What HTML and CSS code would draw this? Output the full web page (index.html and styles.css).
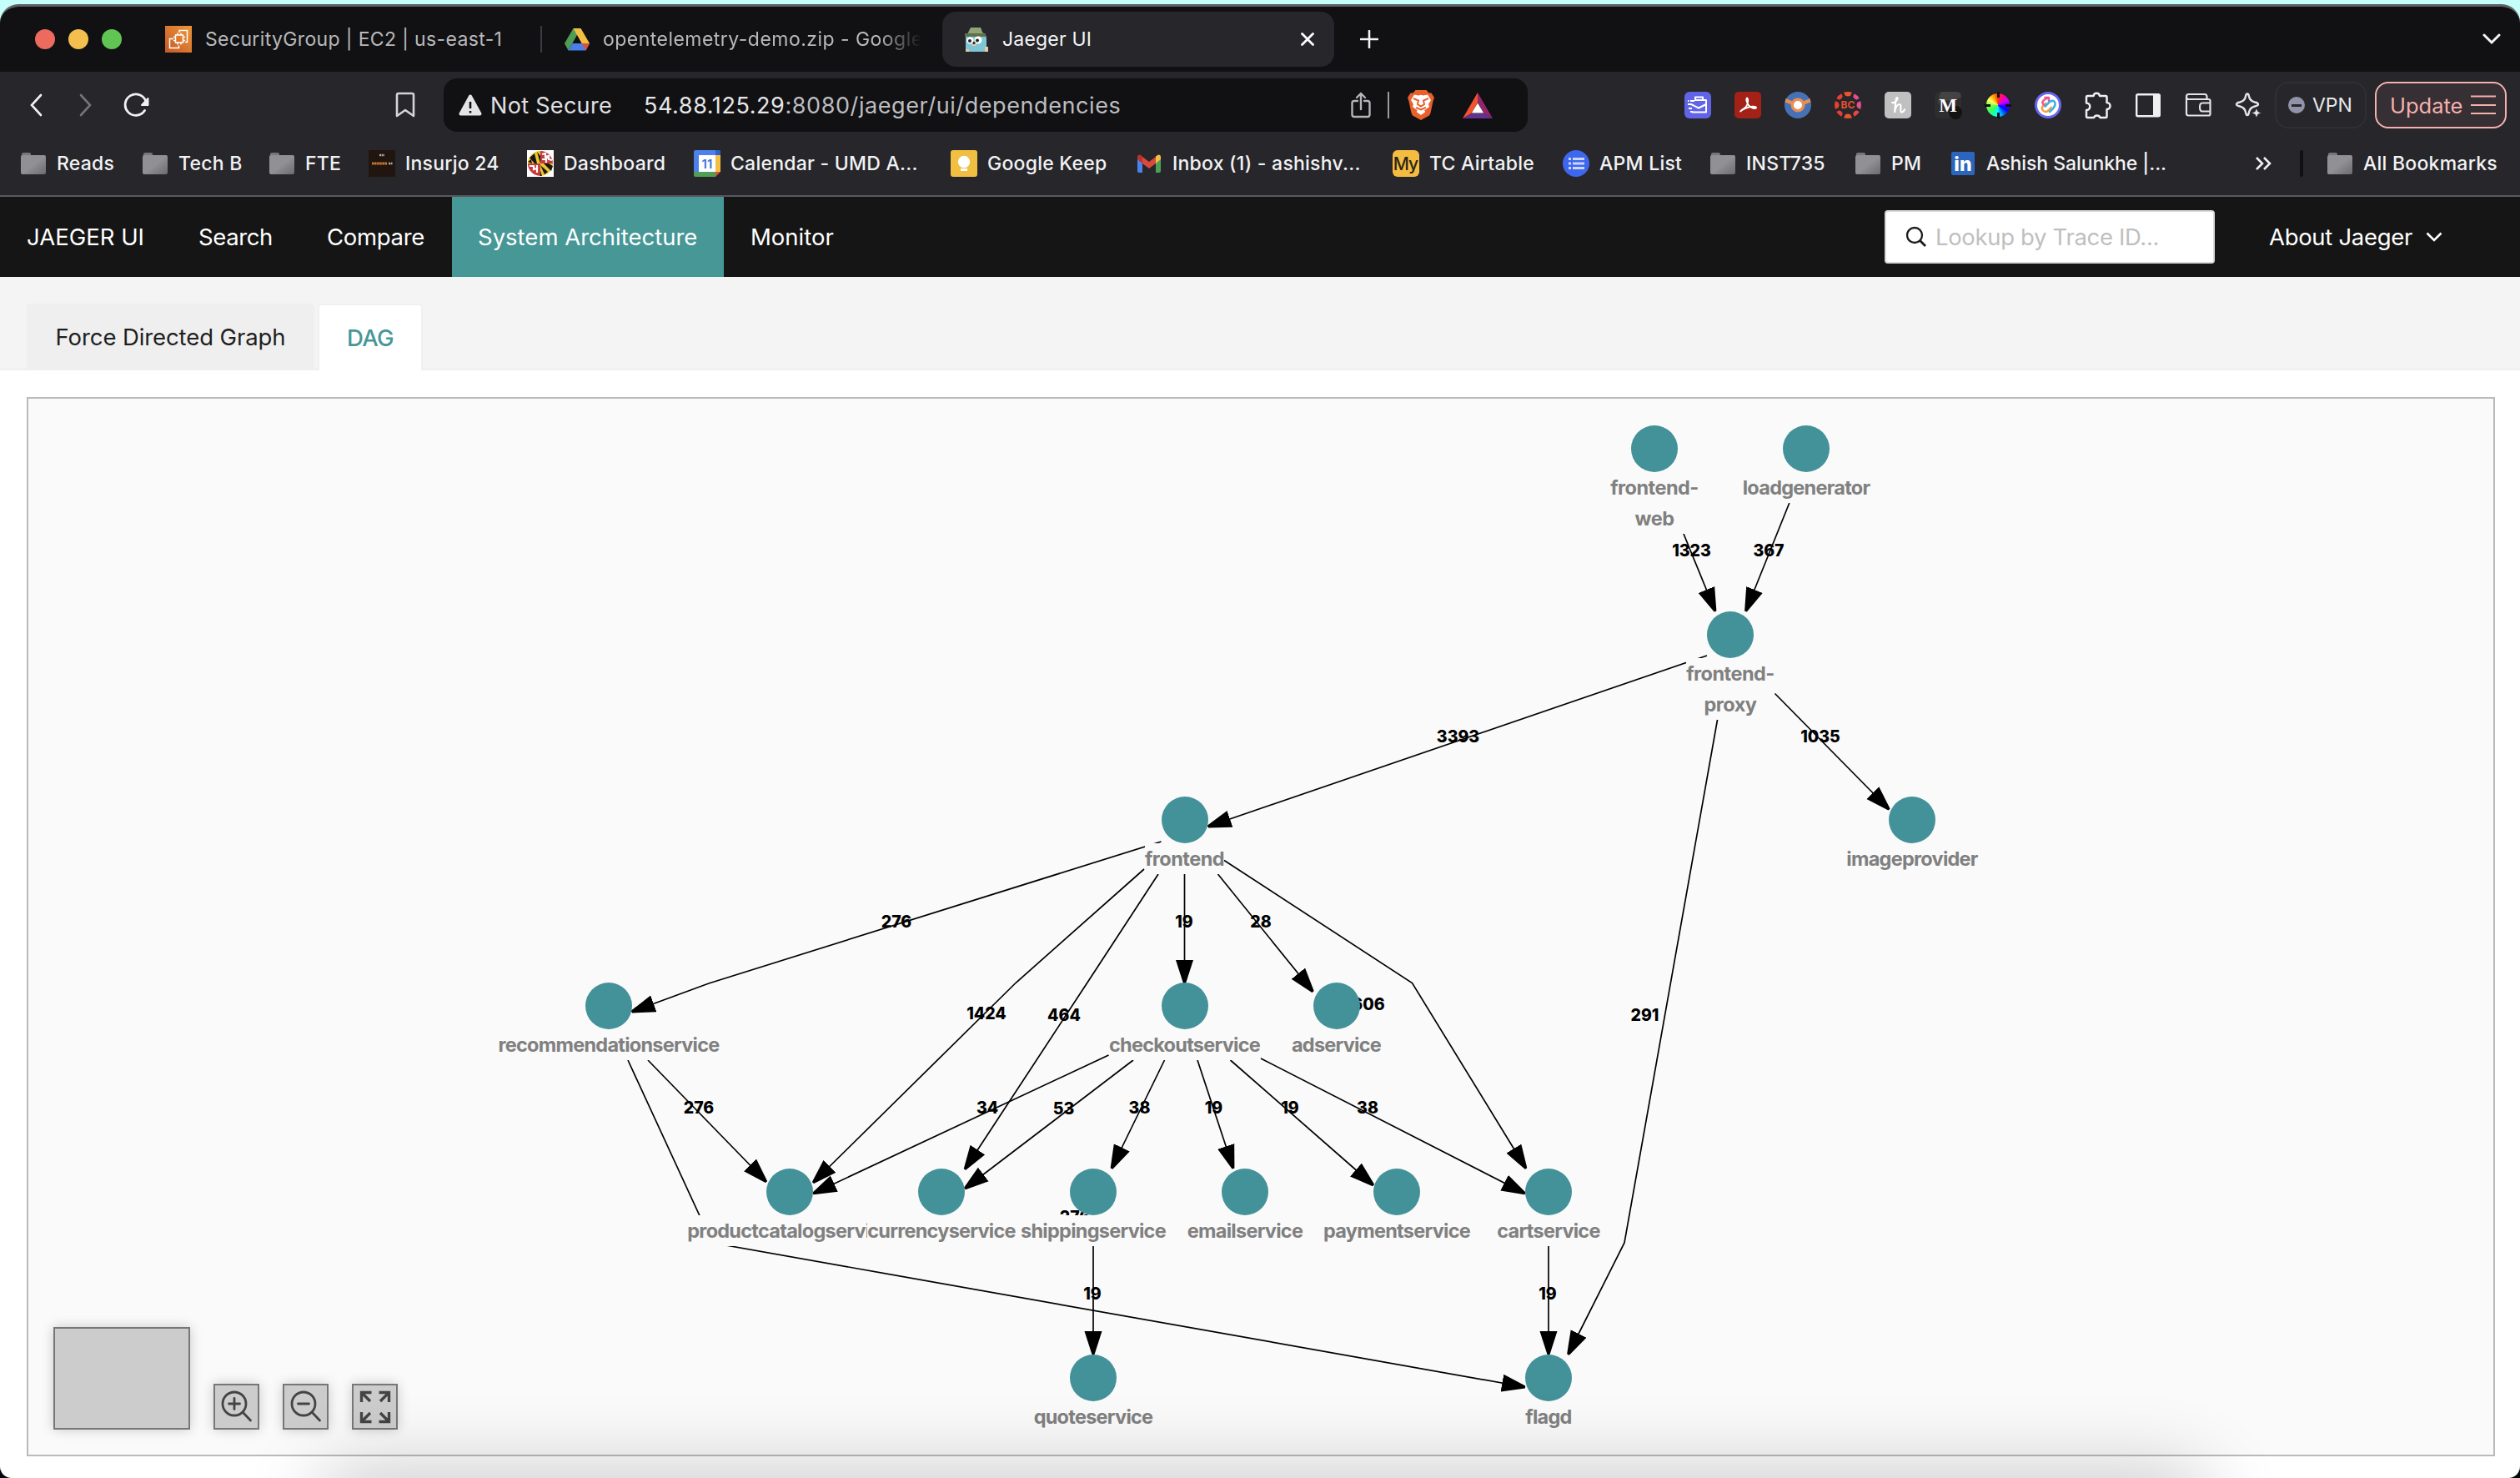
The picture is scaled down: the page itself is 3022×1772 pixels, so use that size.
FILE: index.html
```html
<!DOCTYPE html>
<html lang="en">
<head>
<meta charset="utf-8">
<title>Jaeger UI</title>
<link rel="stylesheet" href="styles.css">
</head>
<body>
<svg width="0" height="0" class="defs" aria-hidden="true">
  <defs>
    <linearGradient id="fold" x1="0" y1="0" x2="1" y2="1"><stop offset="0" stop-color="#8f8f94"/><stop offset=".5" stop-color="#909095"/><stop offset="1" stop-color="#6c6c6e"/></linearGradient>
    <linearGradient id="ec2" x1="0" y1="1" x2="1" y2="0"><stop offset="0" stop-color="#c45a26"/><stop offset="1" stop-color="#f0953a"/></linearGradient>
    <linearGradient id="shz" x1="0" y1="0" x2="1" y2="0"><stop offset="0" stop-color="#f5a742"/><stop offset=".5" stop-color="#ef5d8f"/><stop offset="1" stop-color="#3fb7e8"/></linearGradient>
    <symbol id="folder" viewBox="0 0 30 26"><path d="M1 4V2a2 2 0 0 1 2-2h7a2 2 0 0 1 2 2v1z" fill="#77777b"/><rect y="3" width="30" height="23" rx="2" fill="url(#fold)"/></symbol>
  </defs>
</svg>
<div class="window">
  <header class="tabstrip">
    <div class="lights"><i class="red"></i><i class="yellow"></i><i class="green"></i></div>
    <div class="tab t1">
      <svg width="32" height="32" viewBox="0 0 32 32"><rect width="32" height="32" fill="url(#ec2)"/><g fill="none" stroke="#fff" stroke-width="1.500"><rect x="12.500" y="11" width="9" height="9"/><path d="M15 11V8.500M19 11V8.500M15 22.500V20M19 22.500V20M12.500 13.500H10M12.500 17.500H10M24 13.500h-2.500M24 17.500h-2.500M17 8V5.500h9.500v14H24M10 15.500H5.500v11h11V23.500"/></g></svg>
      <span>SecurityGroup | EC2 | us-east-1</span>
    </div>
    <i class="tabsep"></i>
    <div class="tab t2">
      <svg width="30" height="27" viewBox="0 0 30 27"><path d="M10.500 0h9L10 17l-5.500 9.500L0 18z" fill="#4f9d54"/><path d="M10.500 0h9L30 18H20.500z" fill="#f3bf42"/><path d="M9.500 18H30l-4.500 8.500h-21z" fill="#4a7fe8"/><path d="M20.500 18H30l-4.500 8.500z" fill="#d8523f"/><path d="M15 8.500L9.700 18h10.800z" fill="#111113"/></svg>
      <span class="fade">opentelemetry-demo.zip - Google Drive</span>
    </div>
    <div class="tab active">
      <svg width="30" height="32" viewBox="0 0 30 32"><path d="M2 31V14q0-5 6-6h13q6 1 6 7v16z" fill="#7ec5d6"/><path d="M8 2h12l3 8H4z" fill="#93a277"/><path d="M1 9h25v4H1z" fill="#5f7049"/><circle cx="7.500" cy="17.500" r="4" fill="#fff"/><circle cx="17" cy="17" r="4.500" fill="#fff"/><circle cx="7" cy="18" r="2" fill="#222"/><circle cx="16" cy="17.500" r="2" fill="#222"/><ellipse cx="12" cy="22" rx="3" ry="2" fill="#e7c9a5"/><circle cx="12" cy="20.500" r="1.600" fill="#222"/><path d="M25 25h4v6h-4zM2 28h4v3H2z" fill="#e7c9a5"/></svg>
      <span>Jaeger UI</span>
      <svg class="close" width="16" height="16" viewBox="0 0 16 16"><path d="M1.500 1.500l13 13M14.500 1.500l-13 13" stroke="#fff" stroke-width="2.800" stroke-linecap="round"/></svg>
    </div>
    <svg class="plus" width="22" height="22" viewBox="0 0 22 22"><path d="M11 1v20M1 11h20" stroke="#f4f4f5" stroke-width="2.600" stroke-linecap="round"/></svg>
    <svg class="tabmenu" width="22" height="14" viewBox="0 0 22 14"><path d="M2 2l9 9 9-9" fill="none" stroke="#f4f4f5" stroke-width="3" stroke-linecap="round"/></svg>
  </header>

  <div class="toolbar">
    <svg class="back" width="16" height="28" viewBox="0 0 16 28"><path d="M14 2L3 14l11 12" fill="none" stroke="#f0f0f2" stroke-width="2.600" stroke-linecap="round"/></svg>
    <svg class="fwd" width="16" height="28" viewBox="0 0 16 28"><path d="M2 2l11 12L2 26" fill="none" stroke="#747479" stroke-width="2.600" stroke-linecap="round"/></svg>
    <svg class="reload" width="32" height="30" viewBox="0 0 32 30"><path d="M25.500 21.500A12.700 12.700 0 1 1 27 11" fill="none" stroke="#f0f0f2" stroke-width="2.800" stroke-linecap="round"/><path d="M29.500 7v8h-7.500z" fill="#f0f0f2" stroke="#f0f0f2" stroke-width="2" stroke-linejoin="round"/></svg>
    <svg class="mark" width="24" height="32" viewBox="0 0 24 32"><path d="M2 4q0-2 2-2h16q2 0 2 2v25l-10-7-10 7z" fill="none" stroke="#d5d5d8" stroke-width="2.600" stroke-linejoin="round"/></svg>
    <div class="omnibox">
      <svg width="28" height="26" viewBox="0 0 28 26"><path d="M14 2.500L2.500 23.500h23z" fill="#e4e4e7" stroke="#e4e4e7" stroke-width="4" stroke-linejoin="round"/><path d="M14 9v8M14 20v2.500" stroke="#111113" stroke-width="2.600"/></svg>
      <span class="notsecure">Not Secure</span>
      <span class="url"><b>54.88.125.29</b>:8080/jaeger/ui/dependencies</span>
      <svg class="share" width="24" height="32" viewBox="0 0 24 32"><path d="M8 11H4q-2.500 0-2.500 2.500v14Q1.500 30 4 30h16q2.500 0 2.500-2.500v-14Q22.500 11 20 11h-4M12 21V2M7 7l5-5 5 5" fill="none" stroke="#b4b4b8" stroke-width="2.400" stroke-linecap="round" stroke-linejoin="round"/></svg>
      <i class="vsep"></i>
      <svg class="brave" width="32" height="36" viewBox="0 0 32 36"><path d="M9.500 0h13l3 3.500h3L32 9l-1.500 4.500-3 14-1.500 3L16 36 6 30.500l-1.500-3-3-14L0 9l3.500-5.500h3z" fill="#ea5f2b"/><path d="M8 5.500l5 1 3-.8 3 .8 5-1 4 6.500-3 5 1 3-6 4.500 1.500 1.500L16 30l-5.500-4L12 24.500 6 20l1-3-3-5z" fill="#fff"/><path d="M7 10l6 2.500L12 17l4 2.500L20 17l-1-4.500 6-2.500M10 21l6 2.500 6-2.500" fill="none" stroke="#ea5f2b" stroke-width="2"/></svg>
      <svg class="bat" width="36" height="31" viewBox="0 0 36 31"><path d="M18 0L0 31l10.500-6L18 12z" fill="#f2522c"/><path d="M18 0l18 31-10.500-6L18 12z" fill="#96266a"/><path d="M0 31h36l-10.500-6h-15z" fill="#62328f"/><path d="M18 12.500L10.800 24.500h14.400z" fill="#fff"/></svg>
    </div>
    <div class="exts">
      <svg viewBox="0 0 32 32"><rect width="32" height="32" rx="6" fill="#6264e8"/><g fill="none" stroke="#fff" stroke-width="2" stroke-linejoin="round"><path d="M12 10h14v14.500H9M13 10V6.500h9V10M8 15l9 4.500 9-4.500M4 11h1.500M7 11h5M4 15h5M5 20h4M7 24h3"/></g></svg>
      <svg viewBox="0 0 32 32"><rect width="32" height="32" rx="5" fill="#a32117"/><path d="M7 24c2-4 6-3 8-8 2-5 1-8 .3-8.500-2 0-1 7 3.700 10.500 4 3 7 2 7 1 0-2-8-1.500-13 1-4 2-6 3-6 4z" fill="none" stroke="#fff" stroke-width="1.900"/></svg>
      <svg viewBox="0 0 32 32"><circle cx="16" cy="16" r="16" fill="#4672b5"/><path d="M1.500 8L11 12h10l9.500-4 1 4.500L22 16H10L.5 12.500z" fill="#e88e56"/><circle cx="16" cy="16" r="8.500" fill="#e88e56"/><circle cx="16" cy="16" r="5" fill="#fff"/></svg>
      <svg viewBox="0 0 32 32"><g fill="#e8402f"><path d="M11 0.800q5-1.600 10 0l-2 4q-3 1.500-6 0z" fill="#e9552c"/><path d="M11 31.200q5 1.600 10 0l-2-4q-3-1.500-6 0z" fill="#e9552c"/><path d="M.8 11q-1.600 5 0 10l4-2q1.500-3 0-6z"/><path d="M2.300 8q2-4 6-5.800l1.500 3.500q-1 3-4 4z"/><path d="M2.300 24q2 4 6 5.800l1.500-3.500q-1-3-4-4z"/></g><g fill="#e14f8e"><path d="M31.200 11q1.600 5 0 10l-4-2q-1.500-3 0-6z"/><path d="M29.700 8q-2-4-6-5.800l-1.500 3.500q1 3 4 4z"/><path d="M29.700 24q-2 4-6 5.800l-1.500-3.500q1-3 4-4z" fill="#e8483f"/></g><text x="16" y="20" class="bc">BC</text></svg>
      <svg viewBox="0 0 32 32"><rect width="32" height="32" rx="5" fill="#c0c0c0"/><path d="M9 13c4 1 8-5 6-6-2 0-2 10-3 18 1-6 3-10 6-10s0 9 2 9.500c2 0 3-1 4-3" fill="none" stroke="#fff" stroke-width="2.200" stroke-linecap="round"/></svg>
      <svg viewBox="0 0 32 32"><rect width="32" height="32" rx="6" fill="#2e2e2f"/><path d="M8 0h18q6 0 6 6-4 4-14 5Q7 8 4 16 4 6 8 0z" fill="#434344"/><circle cx="25" cy="25" r="8" fill="#131313"/><text x="16" y="24" class="emm">M</text></svg>
      <i class="wheel"></i>
      <svg viewBox="0 0 32 32"><circle cx="16" cy="16" r="14.500" fill="#fff" stroke="#6669ee" stroke-width="3"/><g fill="none" stroke-width="2.600" stroke-linecap="round" stroke-linejoin="round"><path d="M13 14q-6 4-3.500 8 3.500 4 7.500 0l2.500-3" stroke="#f2a23d"/><path d="M13 17q-6-3-2-7l5-3M12.500 7H17v4" stroke="#ee5a92"/><path d="M12.500 17.500l6-6q5-2 6 2t-6.500 10.500" stroke="#3fb0e6"/></g></svg>
      <svg viewBox="0 0 32 32"><path d="M5 5h5.500a3.800 3.800 0 0 1 7.500 0H25q1.500 0 1.500 1.500V13a4 4 0 0 1 0 8v8.500q0 1.500-1.500 1.500h-6.500a4 4 0 0 0-7.500 0H3.500Q2 31 2 29.500V22a4 4 0 0 0 0-8.500V6.500Q2 5 3.500 5z" fill="none" stroke="#f0f0f2" stroke-width="2.500" stroke-linejoin="round"/></svg>
      <svg viewBox="0 0 32 32"><rect x="2.200" y="3.200" width="27.600" height="26" rx="1.500" fill="none" stroke="#f0f0f2" stroke-width="2.400"/><path d="M22 3h8v26h-8z" fill="#f0f0f2"/></svg>
      <svg viewBox="0 0 32 32"><path d="M2 6v20q0 2.500 2.500 2.500h24q2 0 2-2V11q0-2-2-2H4.500Q2 9 2 6t2.500-3H24q2 0 2.500 2.500V9M30.500 13.500H21q-3 0-3 5t3 5h9.500" fill="none" stroke="#e4e4e6" stroke-width="2.200"/></svg>
      <svg viewBox="0 0 32 32"><path d="M15 2.500q1.500 0 2 3 1 5.500 7 7 4 .8 4 2.500t-4 2.500q-6 1.500-7 7-.5 3.500-2 3.500t-2-3.500q-1-5.500-7-7-4-.8-4-2.500t4-2.500q6-1.500 7-7 .5-3 2-3z" fill="none" stroke="#e4e4e6" stroke-width="2.400"/><path d="M26 19l1.800 4.600L32 25.500l-4.200 1.800L26 32l-1.800-4.700-4.700-1.800 4.700-1.900z" fill="#e4e4e6" stroke="#26262b"/></svg>
    </div>
    <div class="vpn"><i></i><span>VPN</span></div>
    <div class="update"><span>Update</span><svg width="30" height="24" viewBox="0 0 30 24"><path d="M0 1.500h30M0 12h30M0 22h30" stroke="#f4b1af" stroke-width="2.200"/></svg></div>
  </div>

  <div class="bookmarks">
    <div class="f"><svg><use href="#folder"/></svg><span>Reads</span></div>
    <div class="f"><svg><use href="#folder"/></svg><span>Tech B</span></div>
    <div class="f"><svg><use href="#folder"/></svg><span>FTE</span></div>
    <div><svg viewBox="0 0 32 32"><rect width="32" height="32" fill="#20160f"/><path d="M4 16h18" stroke="#cf7a31" stroke-width="3" stroke-dasharray="2.500 .6"/><path d="M24 16h5M13 6h6" stroke="#b5aba1" stroke-width="2.500" stroke-dasharray="2 .6"/></svg><span>Insurjo 24</span></div>
    <div><svg viewBox="0 0 32 32"><rect width="32" height="32" fill="#fff"/><circle cx="16" cy="16" r="15" fill="#fff"/><path d="M16 1v15H1A15 15 0 0 1 16 1z" fill="#e9c62f"/><path d="M16 31V16h15a15 15 0 0 1-15 15z" fill="#e9c62f"/><path d="M3 9l6-5 3 12H9zM12 2l4 5v9zM1 14l4-3 1 5zM16 18l5 11 4-3zM20 16l9 9 2-6-5-3zM16 25l2 6h-2z" fill="#171717"/><path d="M16 1a15 15 0 0 1 15 15H16z" fill="#c63a3c"/><path d="M16 31A15 15 0 0 1 1 16h15z" fill="#c63a3c"/><path d="M18 5l4-1v4l4-1v4l4 1M18 11h5v4M3 19h5v4l4-1v5M12 18v3M22 9h3" stroke="#fff" stroke-width="2.200" fill="none"/></svg><span>Dashboard</span></div>
    <div><svg viewBox="0 0 32 32"><path d="M2 0h28q2 0 2 2v24H0V2q0-2 2-2z" fill="#4c82ea"/><path d="M26 6h6v20h-6z" fill="#f3bf42"/><path d="M26 0h4q2 0 2 2v4h-6z" fill="#2c62c8"/><path d="M0 26h26v6H2q-2 0-2-2z" fill="#4f9f57"/><path d="M26 26h6l-6 6z" fill="#d8503f"/><path d="M6 6h20v20H6z" fill="#fff"/><text x="16" y="22" class="eleven">11</text></svg><span>Calendar - UMD A...</span></div>
    <div><svg viewBox="0 0 32 32"><rect width="32" height="32" rx="3" fill="#f1bf42"/><circle cx="16" cy="14" r="7.200" fill="#fff"/><path d="M12 18h8v2.500h-8zM12 22h8v3h-8z" fill="#fff"/></svg><span>Google Keep</span></div>
    <div><svg viewBox="0 0 32 32"><path d="M2 9v16q0 2 2 2h4V13z" fill="#4c82ea"/><path d="M30 9v16q0 2-2 2h-4V13z" fill="#4f9f57"/><path d="M24 7.500L27 5.500q3 0 3 3V11l-6 5z" fill="#f3bf42"/><path d="M8 7.500L5 5.500q-3 0-3 3V11l6 5z" fill="#b8342c"/><path d="M8 8l8 6 8-6v8l-8 6-8-6z" fill="#d9493c"/></svg><span>Inbox (1) - ashishv...</span></div>
    <div><svg viewBox="0 0 32 32"><rect width="32" height="32" rx="6" fill="#f5bc42"/><text x="15.500" y="24" class="my">My</text></svg><span>TC Airtable</span></div>
    <div><svg viewBox="0 0 32 32"><circle cx="16" cy="16" r="16" fill="#3f67ee"/><path d="M7 10.500h3M7 16h3M7 21.500h3M12 10.500h14M12 16h14M12 21.500h14" stroke="#c9d6ff" stroke-width="3"/></svg><span>APM List</span></div>
    <div class="f"><svg><use href="#folder"/></svg><span>INST735</span></div>
    <div class="f"><svg><use href="#folder"/></svg><span>PM</span></div>
    <div><svg viewBox="0 0 32 32"><rect x="2" y="2" width="28" height="28" rx="2" fill="#2b65bd"/><text x="16" y="25" class="lin">in</text></svg><span class="tight">Ashish Salunkhe |...</span></div>
    <div><svg class="more" viewBox="0 0 20 18"><path d="M2 2l7 7-7 7M11 2l7 7-7 7" fill="none" stroke="#f0f0f2" stroke-width="2.600"/></svg></div>
    <i></i>
    <div class="f"><svg><use href="#folder"/></svg><span>All Bookmarks</span></div>
  </div>

  <nav class="nav">
    <a class="brand"><span>JAEGER UI</span></a>
    <a class="n2"><span>Search</span></a>
    <a class="n3"><span>Compare</span></a>
    <a class="on"><span>System Architecture</span></a>
    <a><span>Monitor</span></a>
    <div class="lookup"><svg width="26" height="26" viewBox="0 0 26 26"><circle cx="11" cy="11" r="9" fill="none" stroke="#1c1c1c" stroke-width="2.300"/><path d="M17.500 17.500l6.500 6.500" stroke="#1c1c1c" stroke-width="2.800"/></svg><span>Lookup by Trace ID...</span></div>
    <div class="about"><span>About Jaeger</span><svg width="20" height="12" viewBox="0 0 20 12"><path d="M1.500 1.500L10 10l8.500-8.500" fill="none" stroke="#fff" stroke-width="2.600"/></svg></div>
  </nav>

  <div class="subtabs">
    <div class="st"><span>Force Directed Graph</span></div>
    <div class="st sel"><span>DAG</span></div>
  </div>

  <main class="page">
    <div class="canvas">
      <svg class="edges" viewBox="34 478 2956 1266">
        <defs><marker id="arrow" markerUnits="userSpaceOnUse" markerWidth="30" markerHeight="22" refX="28" refY="11" orient="auto"><path d="M0 .5L28 9.500v3L0 21.500z"/></marker></defs>
        <g fill="none" stroke="#000" stroke-width="1.700">
          <path marker-end="url(#arrow)" d="M2019 640L2057 733"/>
          <path marker-end="url(#arrow)" d="M2145.800 603L2093.500 733"/>
          <path marker-end="url(#arrow)" d="M2128.500 831.500L2265.500 970.500"/>
          <path marker-end="url(#arrow)" d="M2047 786L1448.500 991"/>
          <path marker-end="url(#arrow)" d="M2059.700 862L1948 1490L1880.500 1624"/>
          <path marker-end="url(#arrow)" d="M1392.500 1009L850 1179L757.500 1213"/>
          <path marker-end="url(#arrow)" d="M1372 1042L1218.500 1178L975 1418"/>
          <path marker-end="url(#arrow)" d="M1389 1048L1304 1178L1157 1402"/>
          <path marker-end="url(#arrow)" d="M1420.500 1048V1179"/>
          <path marker-end="url(#arrow)" d="M1460.500 1048L1574.500 1189"/>
          <path marker-end="url(#arrow)" d="M1468 1031.500L1693.500 1178.500L1830 1401"/>
          <path marker-end="url(#arrow)" d="M1329.500 1265L975 1431"/>
          <path marker-end="url(#arrow)" d="M1359 1271L1157 1425"/>
          <path marker-end="url(#arrow)" d="M1396.500 1271L1333 1401"/>
          <path marker-end="url(#arrow)" d="M1436 1271L1479 1401"/>
          <path marker-end="url(#arrow)" d="M1475.500 1271L1647 1421"/>
          <path marker-end="url(#arrow)" d="M1512 1269L1829 1431"/>
          <path marker-end="url(#arrow)" d="M777 1271L919 1417"/>
          <path marker-end="url(#arrow)" d="M753 1271L854 1490L1829 1663"/>
          <path marker-end="url(#arrow)" d="M1311 1494V1624"/>
          <path marker-end="url(#arrow)" d="M1857 1494V1624"/>
        </g>
        <g class="counts">
          <text x="2028.500" y="666.500">1323</text><text x="2121" y="666.500">367</text><text x="2183" y="889.500">1035</text><text x="1748.500" y="889.500">3393</text>
          <text x="1075" y="1112">276</text><text x="1420" y="1112">19</text><text x="1512" y="1112">28</text>
          <text x="1183" y="1221.500">1424</text><text x="1276" y="1223.500">464</text><text x="1641" y="1210.500">606</text><text x="1972.500" y="1223.500">291</text>
          <text x="838" y="1334.500">276</text><text x="1184" y="1334.500">34</text><text x="1275.500" y="1335.500">53</text><text x="1366.500" y="1334.500">38</text><text x="1455.500" y="1334.500">19</text><text x="1547" y="1334.500">19</text><text x="1640" y="1334.500">38</text>
          <text x="1289" y="1466">276</text><text x="1310" y="1557.500">19</text><text x="1856" y="1557.500">19</text>
        </g>
      </svg>
      <div class="node" style="left:1950px;top:60px"><i></i><span class="two">frontend-<br>web</span></div>
      <div class="node" style="left:2132px;top:60px"><i></i><span>loadgenerator</span></div>
      <div class="node" style="left:2041px;top:283px"><i></i><span class="two">frontend-<br>proxy</span></div>
      <div class="node" style="left:2259px;top:505px"><i></i><span>imageprovider</span></div>
      <div class="node" style="left:1386.500px;top:505px"><i></i><span class="two">frontend</span></div>
      <div class="node" style="left:696px;top:728px"><i></i><span>recommendationservice</span></div>
      <div class="node" style="left:1386.500px;top:728px"><i></i><span>checkoutservice</span></div>
      <div class="node" style="left:1568.500px;top:728px"><i></i><span>adservice</span></div>
      <div class="node" style="left:913px;top:951px"><i></i><span>productcatalogservice</span></div>
      <div class="node" style="left:1095px;top:951px"><i></i><span>currencyservice</span></div>
      <div class="node" style="left:1277px;top:951px"><i></i><span>shippingservice</span></div>
      <div class="node" style="left:1459px;top:951px"><i></i><span>emailservice</span></div>
      <div class="node" style="left:1641px;top:951px"><i></i><span>paymentservice</span></div>
      <div class="node" style="left:1823px;top:951px"><i></i><span>cartservice</span></div>
      <div class="node clear" style="left:1277px;top:1174px"><i></i><span>quoteservice</span></div>
      <div class="node clear" style="left:1823px;top:1174px"><i></i><span>flagd</span></div>
      <div class="controls">
        <div class="minimap"></div>
        <div class="btn"><svg viewBox="0 0 36 42"><circle cx="15" cy="17" r="14" /><path d="M8.500 17h13M15 10.500v13M25 27l9.500 10"/></svg></div>
        <div class="btn"><svg viewBox="0 0 36 42"><circle cx="15" cy="17" r="14" /><path d="M8.500 17h13M25 27l9.500 10"/></svg></div>
        <div class="btn"><svg viewBox="0 0 36 42"><path class="k" d="M1.500 15V3.500h12M1.500 3.500L12 14M34.500 15V3.500h-12M34.500 3.500L24 14M1.500 27v11.500h12M1.500 38.500L12 28M34.500 27v11.500h-12M34.500 38.500L24 28"/></svg></div>
      </div>
    </div>
  </main>
  <div class="dockshade"></div>
</div>
</body>
</html>
```
FILE: styles.css
```css
* { box-sizing: border-box; }
body { margin: 0; width: 3022px; height: 1772px; overflow: hidden; background: linear-gradient(#c5fffa 0 60px, #05070f 60px); font-family: Inter, "Liberation Sans", sans-serif; }
i { display: block; font-style: normal; }
svg { display: block; flex: none; }
span { white-space: nowrap; }
.defs { position: absolute; }
.window { position: relative; margin-top: 5px; height: 1767px; border-radius: 22px 22px 14px 14px; overflow: hidden; background: #fff; border-top: 3px solid #5e6063; }
.tabstrip { display: flex; align-items: center; height: 78px; background: #111113; padding-left: 42px; font-size: 23px; color: #b9b9bc; letter-spacing: .36px; }
.lights { display: flex; gap: 16px; width: 156px; }
.lights i { width: 24px; height: 24px; border-radius: 50%; }
.red { background: #ec6a5e; }
.yellow { background: #f4bf4f; }
.green { background: #61c554; }
.tab { display: flex; align-items: center; gap: 16px; }
.t1 { width: 450px; }
.tabsep { width: 2px; height: 32px; background: #3b3b40; margin-right: 27px; }
.t2 { width: 453px; letter-spacing: .47px; }
.fade { width: 382px; overflow: hidden; -webkit-mask-image: linear-gradient(90deg, #000 330px, transparent 382px); mask-image: linear-gradient(90deg, #000 330px, transparent 382px); }
.active { width: 470px; height: 66px; border-radius: 16px; background: #26262b; padding: 0 24px 0 26px; color: #f5f5f6; letter-spacing: .2px; }
.close { margin-left: auto; }
.plus { margin-left: 31px; }
.tabmenu { margin-left: auto; margin-right: 23px; }

.toolbar { display: flex; align-items: center; height: 80px; background: #26262b; padding-left: 35px; }
.fwd { margin-left: 44px; }
.reload { margin-left: 37px; }
.mark { margin-left: 294px; }
.omnibox { display: flex; align-items: center; margin-left: 34px; width: 1300px; height: 64px; border-radius: 16px; background: #111113; padding-left: 18px; font-size: 27px; color: #bdbdc0; }
.notsecure { margin-left: 10px; width: 184px; color: #e0e0e3; letter-spacing: .31px; }
.url { width: 848px; letter-spacing: .58px; }
.url b { font-weight: 400; color: #e6e6e8; }
.vsep { width: 2px; height: 32px; background: #9b9b9f; margin: 0 22px 0 20px; }
.bat { margin-left: 34px; }
.exts { display: flex; gap: 28px; margin-left: 188px; width: 708px; }
.exts svg, .wheel { width: 32px; height: 32px; overflow: visible; }
.wheel { position: relative; border: 2px solid #26262b; border-radius: 50%; background: conic-gradient(#f30, #f0a 35deg, #c0f 65deg, #50f 90deg, #00f 120deg, #0af 160deg, #0ff 185deg, #3f6 225deg, #7f4 265deg, #ff6 300deg, #fa0 330deg, #f30); }
.wheel::after { content: ""; position: absolute; inset: -2px; background: linear-gradient(#111, #111) 50% 0 / 3px 7px, linear-gradient(#111, #111) 50% 100% / 3px 7px, linear-gradient(#111, #111) 0 50% / 7px 3px, linear-gradient(#111, #111) 100% 50% / 7px 3px; background-repeat: no-repeat; }
.bc { font: 700 12px Inter, sans-serif; text-anchor: middle; fill: #e8502f; }
.emm { font: 700 23px "Liberation Serif", serif; text-anchor: middle; fill: #fff; }
.vpn { display: flex; align-items: center; gap: 9px; width: 110px; height: 56px; border: 2px solid #2f2f35; border-radius: 16px; padding-left: 14px; font-size: 23px; color: #e8e8ea; }
.vpn i { width: 20px; height: 20px; border-radius: 50%; background: linear-gradient(#26262b, #26262b) center / 12px 3px no-repeat #9193a8; }
.update { display: flex; align-items: center; justify-content: space-between; margin-left: 10px; width: 158px; height: 56px; border: 2px solid #f4b1af; border-radius: 16px; background: #362f33; padding: 0 11px 0 16px; font-size: 25.500px; color: #f4b1af; }

.bookmarks { display: grid; grid-template-columns: 146px 152px 119px 190px 200px 308px 222px 308px 204px 177px 174px 113px 366px 56px 31px auto; align-items: center; height: 70px; background: #26262b; border-bottom: 2px solid #58585e; padding: 0 0 8px 25px; font-size: 23px; font-weight: 500; letter-spacing: .24px; color: #f2f2f3; }
.bookmarks > div { display: flex; align-items: center; gap: 12px; }
.bookmarks .f { gap: 13px; }
.bookmarks .tight { letter-spacing: -.06px; }
.bookmarks svg { width: 32px; height: 32px; }
.bookmarks .f svg { width: 30px; height: 26px; }
.bookmarks .more { width: 20px; height: 18px; }
.bookmarks > i { width: 4px; height: 32px; border-radius: 2px; background: #111113; margin-left: -2px; }
.eleven { font: 600 15px Inter, sans-serif; text-anchor: middle; fill: #3b6fd8; }
.my { font: 500 21px Inter, sans-serif; text-anchor: middle; fill: #2b2616; letter-spacing: -1px; }
.lin { font: 800 23px Inter, sans-serif; text-anchor: middle; fill: #fff; }

.nav { display: flex; align-items: center; height: 96px; background: #151515; color: #fff; font-size: 27.500px; padding-left: 32px; }
.brand { width: 206px; }
.n2 { width: 154px; letter-spacing: -.38px; }
.n3 { width: 150px; letter-spacing: -.31px; }
.on { display: flex; align-items: center; height: 96px; width: 326px; padding-left: 31px; margin-right: 32px; background: #479796; }
.lookup { display: flex; align-items: center; gap: 10px; margin-left: auto; width: 396px; height: 64px; border: 2px solid #d9d9d9; border-radius: 4px; background: #fff; color: #bfbfbf; padding-left: 23px; letter-spacing: -.34px; }
.about { display: flex; align-items: center; justify-content: space-between; width: 208px; margin: 0 93px 0 65px; letter-spacing: -.31px; }

.subtabs { display: flex; align-items: flex-end; gap: 4px; height: 112px; background: #f4f4f4; box-shadow: inset 0 -2px #efefef; padding-left: 32px; font-size: 27.500px; letter-spacing: -.1px; color: #1f1f1f; }
.st { display: flex; align-items: center; justify-content: center; width: 345px; height: 80px; background: #efefef; border-radius: 4px 4px 0 0; }
.st.sel { width: 126px; background: #fff; border: 2px solid #f0f0f0; border-bottom: 0; color: #479796; font-weight: 500; letter-spacing: -.63px; }

.page { padding: 32px 30px 0 32px; }
.canvas { position: relative; height: 1270px; border: 2px solid #bababa; background: #fafafa; }
.edges { width: 2956px; height: 1266px; }
.counts { font: 800 19.500px Inter, sans-serif; text-anchor: middle; fill: #000; }
.node { position: absolute; display: flex; flex-direction: column; align-items: center; width: 0; transform: translateY(-28px); }
.node i { flex: none; width: 56px; height: 56px; border-radius: 50%; background: #449299; }
.node span { background: #fafafa; color: #808080; font-size: 23.500px; font-weight: 700; line-height: 37px; letter-spacing: -.74px; text-align: center; }
.node .two { letter-spacing: -.5px; }
.node.clear span { background: none; }
.controls { position: absolute; left: 30px; bottom: 30px; display: flex; align-items: flex-end; gap: 28px; }
.minimap, .btn { border: 2px solid #777; background: #ccc; box-shadow: 0 0 14px rgba(0, 0, 0, .2); }
.minimap { width: 164px; height: 123px; }
.btn { display: flex; align-items: center; justify-content: center; width: 55px; height: 55px; }
.btn svg { width: 36px; height: 42px; overflow: visible; fill: none; stroke: #444; stroke-width: 2.800; stroke-linecap: round; }
.btn .k { stroke-width: 3.400; stroke-linecap: butt; }
.dockshade { position: absolute; left: 390px; right: 382px; bottom: -62px; height: 60px; border-radius: 30px; box-shadow: 0 0 90px 10px rgba(0, 0, 0, .23); }
```
